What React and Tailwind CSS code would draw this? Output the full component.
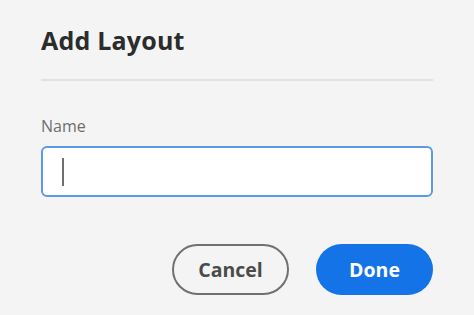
import React from "react";

const App = () => {
  return (
    <div className="w-[474px] h-[315px] bg-[#f4f4f4] font-['Open_Sans',sans-serif] px-[41px] pt-[23px] overflow-hidden">
      {/* Header */}
      <h2 className="text-[25px] leading-[34px] font-bold text-[#2c2c2c] tracking-[0.2px]">
        Add Layout
      </h2>
      <div className="mt-[22px] h-[2px] bg-[#e1e1e1]" />

      {/* Field */}
      <label className="block mt-[35px] text-[16px] leading-[20px] text-[#6e6e6e]">
        Name
      </label>
      <div className="mt-[10px] h-[51px] bg-white border-2 border-[#5a9ae6] rounded-[6px] flex items-center pl-[19px]">
        <span className="w-[2px] h-[28px] bg-[#6e6e6e]" />
      </div>

      {/* Footer */}
      <div className="mt-[47px] flex justify-end gap-[27px]">
        <button className="w-[117px] h-[51px] rounded-full border-2 border-[#707070] text-[19.5px] font-bold text-[#4b4b4b]">
          Cancel
        </button>
        <button className="w-[117px] h-[51px] rounded-full bg-[#1473e6] text-[19.5px] font-bold text-white">
          Done
        </button>
      </div>
    </div>
  );
};

export default App;
